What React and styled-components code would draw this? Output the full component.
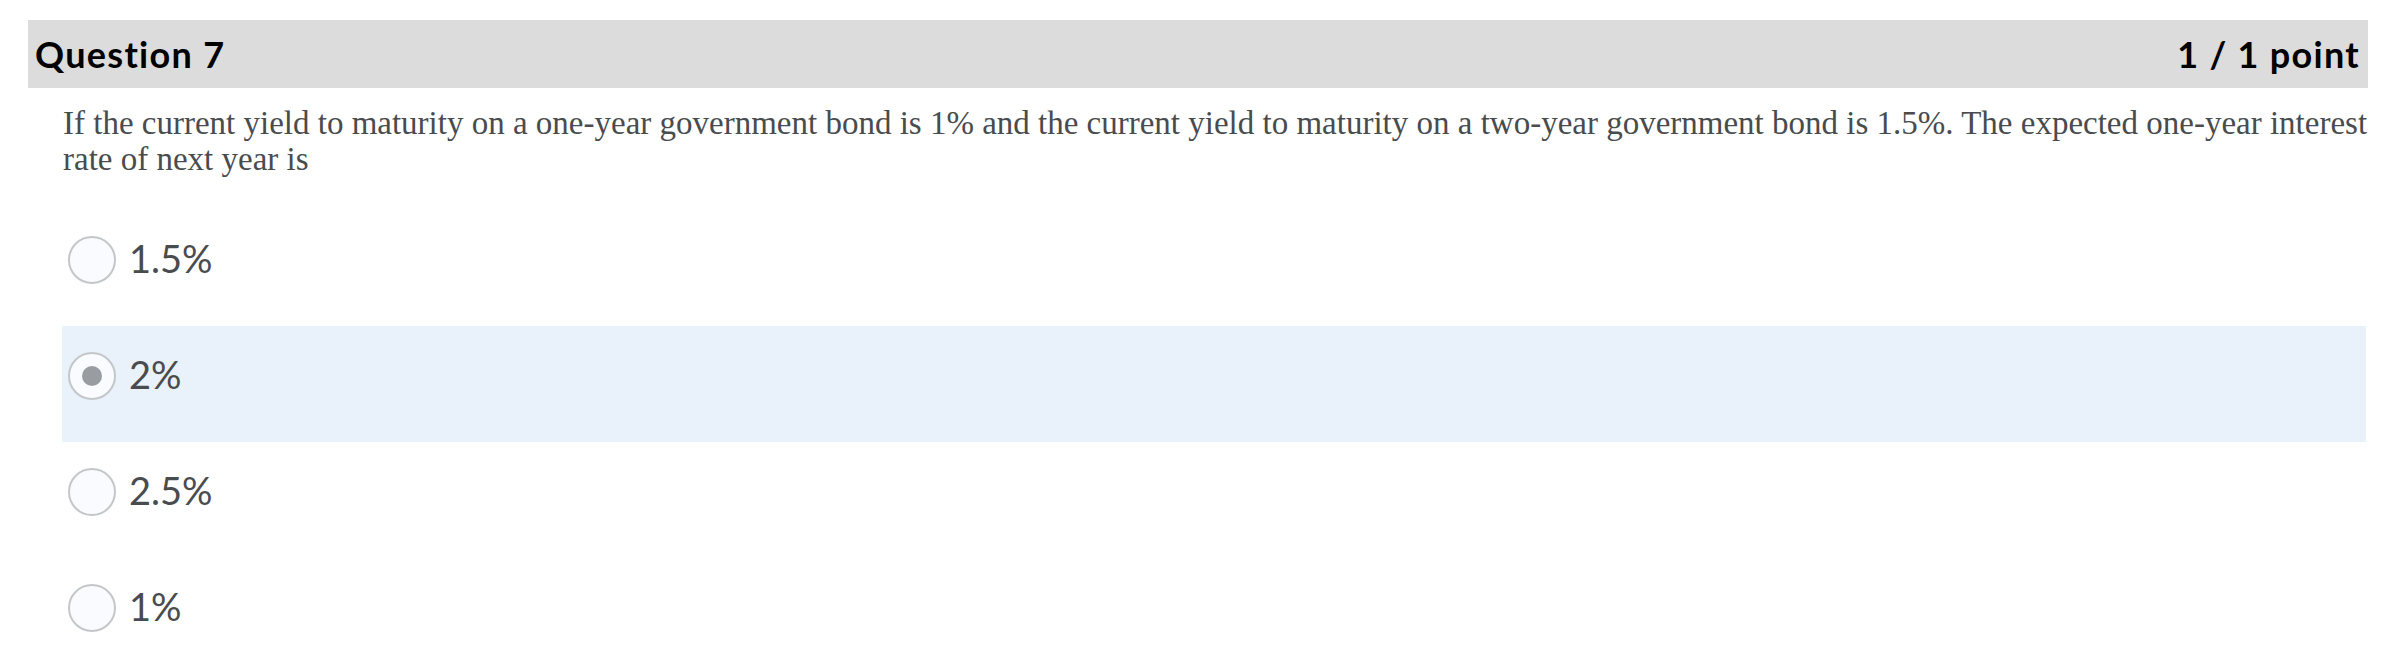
import React from "react";
import styled, { createGlobalStyle } from "styled-components";

const Global = createGlobalStyle`
  html, body { margin: 0; padding: 0; background: #ffffff; }
  * { box-sizing: border-box; }
`;

const Page = styled.div`
  padding: 20px 20px 0 28px;
  width: 2388px;
  height: 666px;
  overflow: hidden;
`;

const Header = styled.div`
  display: flex;
  align-items: center;
  justify-content: space-between;
  height: 68px;
  background: #dcdcdc;
  padding: 0 8px 0 7px;
  font-family: Lato, "Liberation Sans", sans-serif;
  font-weight: 700;
  font-size: 36px;
  color: #000000;
  line-height: 68px;
`;

const HeaderText = styled.h2`
  margin: 0;
  font: inherit;
  letter-spacing: 1.3px;
`;

const QuestionText = styled.p`
  margin: 17px -18px 33px 0;
  padding-left: 35px;
  font-family: "Liberation Serif", "Times New Roman", serif;
  font-size: 33px;
  line-height: 36px;
  color: #494c4e;
`;

const Options = styled.div`
  display: flex;
  flex-direction: column;
  margin: 0 2px 0 34px;
`;

const OptionRow = styled.label`
  display: flex;
  align-items: flex-start;
  gap: 13px;
  height: 116px;
  padding: 26px 6px 0;
  background: ${(p) => (p.$selected ? "#e9f1fb" : "transparent")};
`;

const Radio = styled.span`
  flex: 0 0 auto;
  width: 48px;
  height: 48px;
  border-radius: 50%;
  border: 2px solid #c4c7ca;
  background: #f9fbfe;
  display: flex;
  align-items: center;
  justify-content: center;
`;

const Dot = styled.span`
  width: 20px;
  height: 20px;
  border-radius: 50%;
  background: #999da1;
`;

const OptionLabel = styled.span`
  font-family: Lato, "Liberation Sans", sans-serif;
  font-size: 38px;
  line-height: 44px;
  color: #494c4e;
`;

const options = [
  { label: "1.5%", selected: false },
  { label: "2%", selected: true },
  { label: "2.5%", selected: false },
  { label: "1%", selected: false },
];

export default function App() {
  return (
    <>
      <Global />
      <Page>
        <Header>
          <HeaderText>Question 7</HeaderText>
          <HeaderText>1 / 1 point</HeaderText>
        </Header>
        <QuestionText>
          If the current yield to maturity on a one-year government bond is 1% and the current yield to
          maturity on a two-year government bond is 1.5%. The expected one-year interest rate of next year is
        </QuestionText>
        <Options>
          {options.map((o) => (
            <OptionRow key={o.label} $selected={o.selected}>
              <Radio>{o.selected && <Dot />}</Radio>
              <OptionLabel>{o.label}</OptionLabel>
            </OptionRow>
          ))}
        </Options>
      </Page>
    </>
  );
}
